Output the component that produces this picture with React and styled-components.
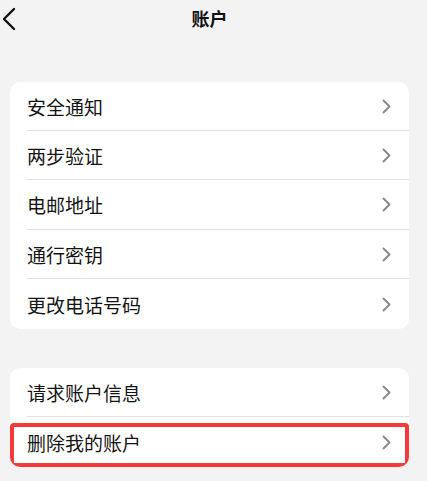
import React from 'react';
import styled, { createGlobalStyle } from 'styled-components';

const GlobalStyle = createGlobalStyle`
  html, body {
    margin: 0;
    padding: 0;
    background: #f3f3f3;
  }
  body {
    font-family: "Noto Sans CJK SC", "Noto Sans", sans-serif;
    color: #141414;
  }
`;

const Page = styled.div`
  box-sizing: border-box;
  min-height: 481px;
  padding: 0 18px 0 10px;
  background: #f3f3f3;
`;

const Header = styled.header`
  display: grid;
  grid-template-columns: 1fr auto 1fr;
  align-items: center;
  height: 37px;
  margin-bottom: 45px;
`;

const BackButton = styled.button`
  justify-self: start;
  display: flex;
  align-items: center;
  margin-left: -9px;
  padding: 0;
  border: none;
  background: transparent;
  cursor: pointer;
`;

const Title = styled.h1`
  margin: 0;
  font-size: 18px;
  font-weight: 700;
  line-height: 37px;
  color: #111;
`;

const Card = styled.ul`
  list-style: none;
  margin: 0 0 39px;
  padding: 0;
  background: #ffffff;
  border-radius: 10px;
  overflow: hidden;
`;

const Row = styled.li`
  position: relative;
  display: flex;
  align-items: center;
  justify-content: space-between;
  box-sizing: border-box;
  height: ${p => p.$h}px;
  margin-left: 17px;
  padding-right: 18px;
  border-bottom: ${p => (p.$last ? 'none' : '1px solid #e2e2e2')};
  cursor: pointer;
`;

const Label = styled.span`
  font-size: 19px;
  line-height: 1;
  color: #141414;
`;

const Highlight = styled.div`
  position: absolute;
  top: 6px;
  bottom: 0;
  left: -17px;
  right: 0;
  border: 4px solid #f7383b;
  border-radius: 4px;
  pointer-events: none;
`;

const Chevron = () => (
  <svg width="9" height="15" viewBox="0 0 9 15" fill="none">
    <polyline points="1.5,1.5 7.5,7.5 1.5,13.5" stroke="#8b8b8b" strokeWidth="2" strokeLinecap="round" strokeLinejoin="round" />
  </svg>
);

const BackIcon = () => (
  <svg width="16" height="24" viewBox="0 0 16 24" fill="none">
    <polyline points="13,2 3,12 13,22" stroke="#111" strokeWidth="2.4" strokeLinecap="round" strokeLinejoin="round" />
  </svg>
);

const groups = [
  [
    { label: '安全通知', h: 49 },
    { label: '两步验证', h: 49 },
    { label: '电邮地址', h: 50 },
    { label: '通行密钥', h: 49 },
    { label: '更改电话号码', h: 50 },
  ],
  [
    { label: '请求账户信息', h: 49 },
    { label: '删除我的账户', h: 50, marked: true },
  ],
];

export default function App() {
  return (
    <Page>
      <GlobalStyle />
      <Header>
        <BackButton aria-label="返回"><BackIcon /></BackButton>
        <Title>账户</Title>
        <span />
      </Header>
      {groups.map((items, gi) => (
        <Card key={gi}>
          {items.map((item, i) => (
            <Row key={item.label} $h={item.h} $last={i === items.length - 1}>
              <Label>{item.label}</Label>
              <Chevron />
              {item.marked && <Highlight />}
            </Row>
          ))}
        </Card>
      ))}
    </Page>
  );
}
